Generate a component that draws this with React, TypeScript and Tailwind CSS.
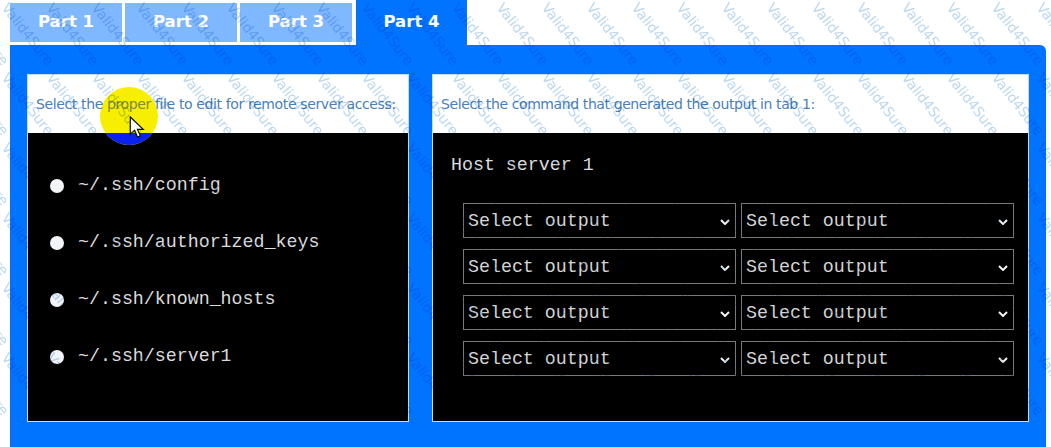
const mono = "font-['Liberation_Mono',monospace]";
const sans = "font-['DejaVu_Sans',sans-serif]";

const tabs = ["Part 1", "Part 2", "Part 3"];
const files = [
  "~/.ssh/config",
  "~/.ssh/authorized_keys",
  "~/.ssh/known_hosts",
  "~/.ssh/server1",
];

// watermark repeats every 45px across and 70px down
const marks = Array.from({ length: 7 * 25 }).map((_, i) => ({
  left: (i % 25) * 45 - 54,
  top: Math.floor(i / 25) * 70 - 45,
}));

const Chevron = () => (
  <svg viewBox="0 0 10 6" className="h-[6px] w-[10px]">
    <path d="M1 1l4 4 4-4" fill="none" stroke="#f4f4f4" strokeWidth="2" />
  </svg>
);

const OutputSelect = () => (
  <div className={`flex h-[35px] flex-1 items-center justify-between border border-[#77797c] pl-1 pr-[5px] pt-[2px] text-[18.3px] text-[#d4d4d4] ${mono}`}>
    <span>Select output</span>
    <Chevron />
  </div>
);

const App = () => (
  <div className="relative h-[447px] w-[1051px] overflow-hidden bg-white pl-[10px] pr-[5px] pt-[3px]">
    <div className={`flex h-[42px] gap-[3px] text-[16.500px] font-bold text-white ${sans}`}>
      {tabs.map((tab) => (
        <div key={tab} className="flex h-[39px] w-[112px] items-center justify-center bg-[#7fb8ff]">
          {tab}
        </div>
      ))}
      <div className="-mt-[3px] ml-[1px] flex h-[45px] w-[111px] items-center justify-center bg-[#0073ff]">
        Part 4
      </div>
    </div>
    <div className="flex h-[402px] gap-[23px] rounded-tr-[6px] bg-[#0073ff] px-[17px] pt-[29px]">
      <div className="flex h-[348px] w-[382px] flex-col border border-[#c5dcf5]">
        <div className={`flex h-[58px] items-center bg-white pl-2 text-[14px] text-[#4a80b8] ${sans}`}>
          <span className="relative z-10 whitespace-nowrap tracking-[-0.37px]">
            Select the <span className="text-[#7d8a3f]">proper</span> file to edit for remote server access:
          </span>
        </div>
        <div className={`flex flex-1 flex-col gap-[34px] bg-black pl-[22px] pt-[41px] text-[18.3px] text-[#dcdcdc] ${mono}`}>
          {files.map((file) => (
            <div key={file} className="flex h-[23px] items-center gap-[14px]">
              <div className="size-[14px] rounded-full bg-[#f2f4f7]" />
              <span>{file}</span>
            </div>
          ))}
        </div>
      </div>
      <div className="flex h-[348px] w-[597px] flex-col border border-[#c5dcf5]">
        <div className={`flex h-[58px] items-center bg-white pl-2 text-[14px] text-[#4a80b8] ${sans}`}>
          <span className="whitespace-nowrap tracking-[-0.4px]">Select the command that generated the output in tab 1:</span>
        </div>
        <div className={`flex flex-1 flex-col bg-black pl-[15px] pr-[14px] pt-[21px] ${mono}`}>
          <div className="pl-[3px] text-[18.3px] leading-[23px] text-[#dcdcdc]">Host server 1</div>
          <div className="mt-[26px] flex flex-col gap-[11px] pl-[15px]">
            {[0, 1, 2, 3].map((row) => (
              <div key={row} className="flex gap-[5px]">
                <OutputSelect />
                <OutputSelect />
              </div>
            ))}
          </div>
        </div>
      </div>
    </div>

    {/* cursor highlight */}
    <div className="absolute left-[100px] top-[87px] z-[5] size-[58px] overflow-hidden rounded-full bg-[#f8ee00]">
      <div className="mt-[46px] h-[12px] bg-[#0a22f0]" />
    </div>
    <svg viewBox="0 0 16 24" className="absolute left-[129px] top-[116px] z-20 h-[23px] w-[16px]">
      <path d="M1 1v18l4.500-4 3 7 3-1.300-3-6.700h6z" fill="#fff" stroke="#111" strokeWidth="1.300" />
    </svg>

    {/* watermark */}
    <div className="pointer-events-none absolute inset-0 z-10 overflow-hidden mix-blend-multiply">
      {marks.map((m, i) => (
        <span
          key={i}
          className={`absolute w-[72px] rotate-[52deg] whitespace-nowrap text-[14px] leading-4 text-[#bcd8f0] ${sans}`}
          style={{ left: m.left, top: m.top }}
        >
          Valid4Sure
        </span>
      ))}
    </div>
  </div>
);

export default App;
